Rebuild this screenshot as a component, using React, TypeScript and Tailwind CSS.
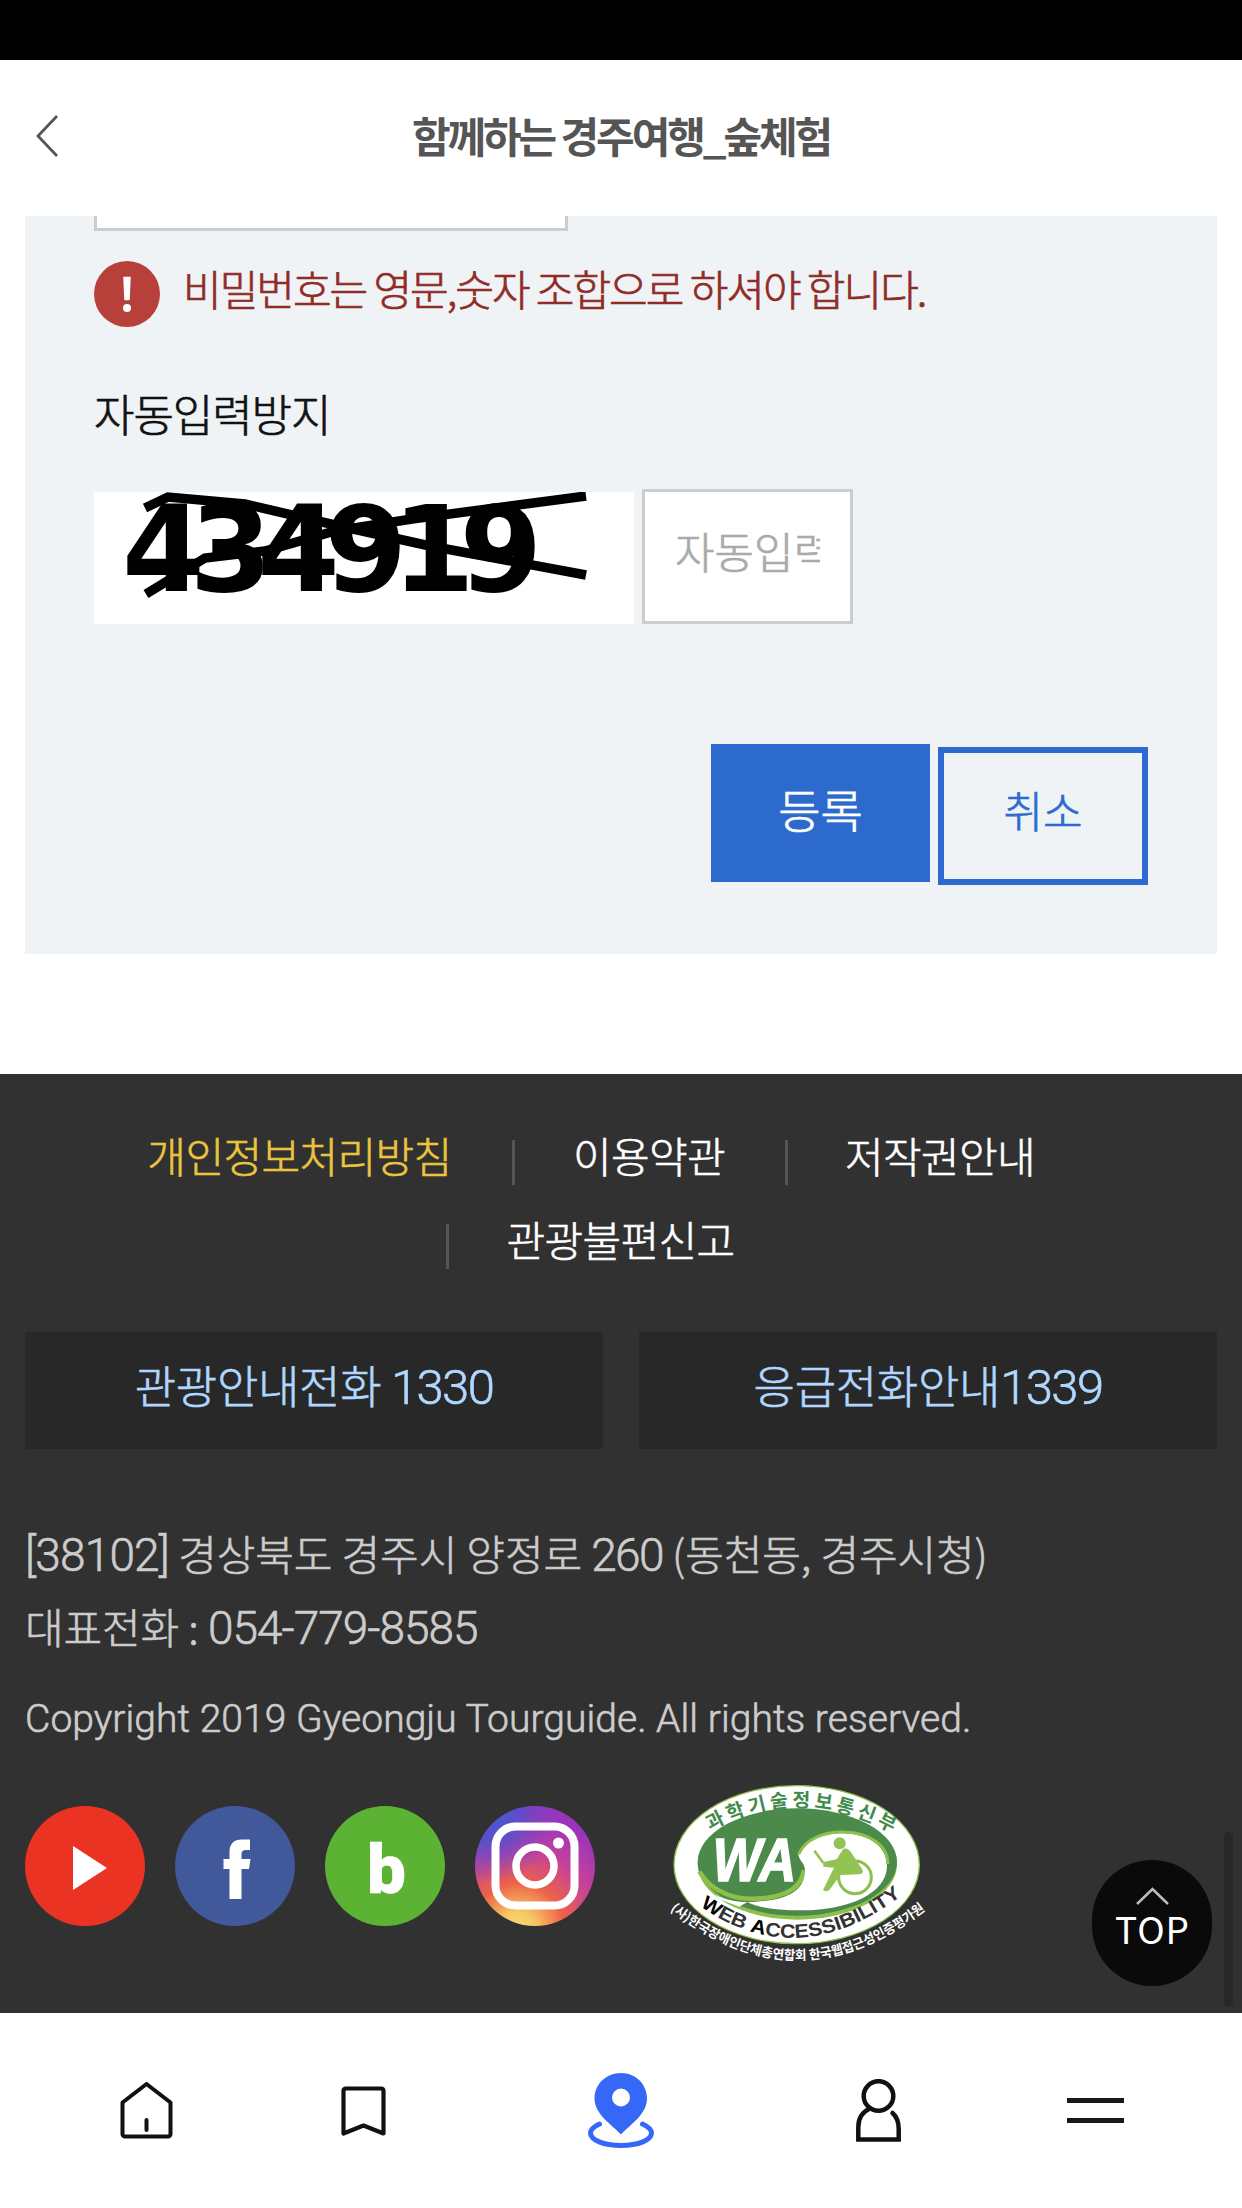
import React from "react";

function BackIcon() {
  return (
    <svg viewBox="0 0 22 42" className="h-[42px] w-[22px]" fill="none" stroke="#555" strokeWidth="2.8">
      <path d="M21 1 2 21l19 20" />
    </svg>
  );
}

function Captcha() {
  return (
    <svg viewBox="94 492 540 132" className="mt-[3px] h-[132px] w-[540px] bg-white">
      <text x="122" y="591" fontFamily="DejaVu Sans" fontWeight="700" fontSize="119" letterSpacing="-15.300">
        434919
      </text>
      <g fill="none" stroke="#000" strokeWidth="9.500">
        <path d="M146 594 L205 558 L265 551 L335 531 L412 519 L586 496" />
        <path d="M145 508 L168 497 L245 504 L335 525 L430 546 L586 575" />
      </g>
    </svg>
  );
}

function InstagramIcon() {
  return (
    <svg viewBox="0 0 120 120" className="h-[120px] w-[120px]">
      <defs>
        <radialGradient id="igWarm" cx="0.36" cy="1.02" r="0.95">
          <stop offset="0" stopColor="#fbdc73" />
          <stop offset="0.15" stopColor="#f8c765" />
          <stop offset="0.4" stopColor="#ed6248" />
          <stop offset="0.7" stopColor="#c4419b" />
          <stop offset="1" stopColor="#9a35bb" />
        </radialGradient>
        <radialGradient id="igCool" cx="0.1" cy="0.05" r="0.6">
          <stop offset="0" stopColor="#3b5fd8" />
          <stop offset="0.45" stopColor="#5a4fcb" stopOpacity="0.9" />
          <stop offset="1" stopColor="#7a3fc4" stopOpacity="0" />
        </radialGradient>
      </defs>
      <circle cx="60" cy="60" r="60" fill="url(#igWarm)" />
      <circle cx="60" cy="60" r="60" fill="url(#igCool)" />
      <rect x="20.5" y="20.5" width="79" height="79" rx="20" fill="none" stroke="#fff" strokeWidth="8" />
      <circle cx="60" cy="60" r="19" fill="none" stroke="#fff" strokeWidth="7.5" />
      <circle cx="83.500" cy="37" r="5.500" fill="#fff" />
    </svg>
  );
}

function WebAccessibilityMark() {
  return (
    <svg viewBox="0 0 900 630" className="-mt-9 ml-[55px] h-[210px] w-[300px]">
      <defs>
        <path id="arcTop" d="M180 182 Q 440 38 722 186" />
        <path id="arcMid" d="M150 408 Q 440 612 750 380" />
        <path id="arcLow" d="M60 420 Q 440 720 826 420" />
      </defs>
      <ellipse cx="440" cy="284" rx="368" ry="237" fill="#fff" stroke="#8fc04d" strokeWidth="4" />
      <ellipse cx="442" cy="283" rx="299" ry="166" fill="#8dc04b" />
      <ellipse cx="442" cy="276" rx="299" ry="161" fill="#4b8a4a" />
      <path
        d="M148 305 C190 375 270 390 320 386 C410 382 455 350 462 300"
        fill="none"
        stroke="#8dc04b"
        strokeWidth="14"
      />
      <path
        d="M445 255 C465 206 530 188 580 190 C665 192 711 235 711 288 C711 372 590 423 450 421 C380 421 320 412 292 396 L268 410 L210 388 L195 374 C240 396 280 397 320 395 C410 390 465 362 465 302 C465 280 450 275 445 255Z"
        fill="#fff"
      />
      <path
        d="M446 253 C465 205 530 184 580 186 C668 188 714 232 714 282"
        fill="none"
        stroke="#8dc04b"
        strokeWidth="9"
      />
      <text
        x="188"
        y="332"
        fontFamily="Liberation Sans"
        fontWeight="700"
        fontStyle="italic"
        fontSize="184"
        textLength="250"
        lengthAdjust="spacingAndGlyphs"
        fill="#fff"
        stroke="#fff"
        strokeWidth="5"
      >
        WA
      </text>
      <circle cx="615" cy="322" r="49" fill="#fff" stroke="#8dc04b" strokeWidth="9" />
      <circle cx="569" cy="220" r="18" fill="#93c353" />
      <path d="M580 236 Q594 232 604 248 L638 300 Q641 312 628 313 L572 315 L538 360 Q528 368 519 360 L552 293 L520 290 V276 L560 268Z" fill="#93c353" />
      <path d="M493 242 520 279" fill="none" stroke="#93c353" strokeWidth="8" />
      <text fontFamily="Noto Sans CJK KR" fontWeight="700" fontSize="58" fill="#3f8a4c">
        <textPath href="#arcTop" textLength="572">과학기술정보통신부</textPath>
      </text>
      <text fontFamily="Liberation Sans" fontWeight="700" fontSize="58" fill="#333">
        <textPath href="#arcMid" textLength="655" lengthAdjust="spacingAndGlyphs">
          <tspan fill="#000">W</tspan>EB <tspan fill="#000">A</tspan>CCESSIBILITY
        </textPath>
      </text>
      <text fontFamily="Noto Sans CJK KR" fontWeight="700" fontSize="40" fill="#fff">
        <textPath href="#arcLow" textLength="838" lengthAdjust="spacingAndGlyphs">(사)한국장애인단체총연합회 한국웹접근성인증평가원</textPath>
      </text>
    </svg>
  );
}

function SocialLinks() {
  return (
    <div className="mt-[59px] flex h-[120px] items-start">
      <div className="flex gap-[30px]">
        <div className="flex size-[120px] items-center justify-center rounded-full bg-[#eb3323]">
          <svg viewBox="0 0 34 44" className="mt-[3px] ml-[10px] h-[44px] w-[34px]" fill="#fff">
            <path d="M0 0 34 22 0 44Z" />
          </svg>
        </div>
        <svg viewBox="0 0 120 120" className="size-[120px]">
          <circle cx="60" cy="60" r="60" fill="#41599a" />
          <path d="M75 33.500V44H71Q66.500 44 66.500 48V53H75.500L74 63H66.500V93H54.500V63H48.500V53H54.500V46Q54.500 33.500 67 33.500Z" fill="#fff" />
        </svg>
        <div className="flex size-[120px] items-center justify-center rounded-full bg-[#5cb233]">
          <span className="mt-[8px] ml-[3px] font-[Roboto] text-[69px] leading-[80px] font-black text-white">b</span>
        </div>
        <InstagramIcon />
      </div>
      <WebAccessibilityMark />
    </div>
  );
}

function Divider() {
  return <i className="mt-[16px] block h-[45px] w-[3px] bg-[#555]" />;
}

function Footer() {
  return (
    <footer className="h-[939px] bg-[#313131] px-[25px] pt-[38px]">
      <div className="flex h-[84px] items-center pl-[125px] text-[42px] leading-[84px] tracking-[-0.6px] whitespace-nowrap text-white">
        <a className="mr-[62px] ml-[-1px] flex w-[301px] justify-center pt-px text-[#ecc540]">개인정보처리방침</a>
        <Divider />
        <a className="mr-[60px] ml-[58px] flex w-[152px] justify-center pt-px">이용약관</a>
        <Divider />
        <a className="ml-[59px] flex w-[186px] justify-center pt-px">저작권안내</a>
      </div>
      <div className="flex h-[84px] items-center pl-[421px] text-[42px] leading-[84px] tracking-[-0.6px] whitespace-nowrap text-white">
        <Divider />
        <a className="ml-[58px] flex w-[227px] justify-center pt-px">관광불편신고</a>
      </div>

      <div className="mt-[52px] grid grid-cols-2 gap-9 text-center text-[45px] leading-[105px] tracking-[-0.3px] text-[#b0d7ff]">
        <a className="h-[117px] bg-[#282828]">
          관광안내전화 <span className="font-[Roboto] text-[49px] tracking-[-1.6px]">1330</span>
        </a>
        <a className="h-[117px] bg-[#282828]">
          응급전화안내<span className="font-[Roboto] text-[49px] tracking-[-1.6px]">1339</span>
        </a>
      </div>

      <address className="mt-[67px] text-[42px] leading-[73px] tracking-[-0.1px] whitespace-nowrap text-[#ccc] not-italic">
        <span className="font-[Roboto] text-[46px] leading-none tracking-[-0.8px]">[38102]</span> 경상북도 경주시 양정로{" "}
        <span className="font-[Roboto] text-[46px] leading-none tracking-[-1.6px]">260</span> (동천동, 경주시청)
        <br />
        대표전화 : <span className="font-[Roboto] text-[46px] leading-none tracking-[-1px]">054-779-8585</span>
      </address>
      <p className="mt-[27px] mb-[-2px] font-[Roboto] text-[39px] leading-[60px] tracking-[0.05px] whitespace-nowrap text-[#ccc]">
        Copyright 2019 Gyeongju Tourguide. All rights reserved.
      </p>
      <SocialLinks />
    </footer>
  );
}

function BottomNav() {
  return (
    <nav className="flex h-[195px] items-center bg-white pl-[120px]">
      <svg viewBox="0 0 53 57" className="h-[57px] w-[53px]" fill="none" stroke="#111" strokeWidth="4" strokeLinejoin="round">
        <path d="M26.500 2 50.500 20.500V52a2.500 2.500 0 0 1-2.500 2.500H5A2.500 2.500 0 0 1 2.500 52V20.500Z" />
        <path d="M26.500 38v10" strokeLinecap="round" />
      </svg>
      <svg viewBox="0 0 45 50" className="ml-[168px] h-[50px] w-[45px]" fill="none" stroke="#111" strokeWidth="4.200" strokeLinejoin="round">
        <path d="M5 2.500H40Q42.500 2.500 42.500 5V47.500L22.500 39.500 2.500 47.500V5Q2.500 2.500 5 2.500Z" />
      </svg>
      <svg viewBox="0 0 66 75" className="ml-[202px] h-[75px] w-[66px]">
        <path fillRule="evenodd" fill="#3568f6" d="M33 0C47.500 0 59 11 59 25.500 59 41 43 51 33 61.500 23 51 6.500 41 6.500 25.500 6.500 11 18.500 0 33 0ZM33 15.500a9 9 0 1 0 0 18 9 9 0 0 0 0-18Z" />
        <path d="M11.500 51C5 54 2.500 57 2.500 60c0 7 13 12.500 30.500 12.500S63.500 67 63.500 60c0-3-2.500-6-9-9" fill="none" stroke="#3568f6" strokeWidth="5" strokeLinecap="round" />
      </svg>
      <svg viewBox="0 0 45 63" className="ml-[202px] h-[63px] w-[45px]" fill="none" stroke="#111" strokeWidth="4.500">
        <circle cx="22.500" cy="17" r="14.800" />
        <path d="M14 29.500C6 33 2.300 40 2.300 48V60.500H42.700V50C42.700 42 40.500 37.500 36.500 34" strokeLinecap="round" />
      </svg>
      <div className="ml-[166px] flex w-[57px] flex-col gap-[15px]">
        <i className="block h-[5px] bg-[#18171c]" />
        <i className="block h-[5px] bg-[#18171c]" />
      </div>
    </nav>
  );
}

export default function App() {
  return (
    <div className="relative h-[2208px] w-[1242px] overflow-hidden bg-white font-['Noto_Sans_CJK_KR',sans-serif] font-light">
      <div className="h-[60px] bg-black" />
      <header className="grid h-[156px] grid-cols-[340px_1fr_340px] items-center">
        <div className="-mt-[5px] pl-[36px]">
          <BackIcon />
        </div>
        <h1 className="-mt-[6px] text-center text-[42px] leading-[60px] font-bold tracking-[-3.1px] whitespace-nowrap text-[#555]">
          함께하는 경주여행_숲체험
        </h1>
      </header>

      <main className="h-[858px] px-[25px] [-webkit-text-stroke:0.7px]">
        <section className="h-[738px] bg-[#eff3f6] px-[69px]">
          <div className="h-[15px] w-[474px] border-[3px] border-t-0 border-[#ccc] bg-white" />
          <p className="mt-[30px] flex h-[66px] items-center text-[42px] tracking-[-2px] whitespace-nowrap text-[#902b26]">
            <svg viewBox="0 0 66 66" className="mr-[23px] size-[66px]">
              <circle cx="33" cy="33" r="33" fill="#b7403a" />
              <path d="M30 16.500h6l-1 22h-4Z" fill="#fff" stroke="#fff" strokeWidth="1.500" strokeLinejoin="round" />
              <circle cx="33" cy="47" r="4" fill="#fff" />
            </svg>
            <span className="-mt-[12px] leading-[60px]">비밀번호는 영문,숫자 조합으로 하셔야 합니다.</span>
          </p>
          <label className="mt-[56px] block h-[60px] text-[44px] leading-[60px] tracking-[-1.1px] text-[#111]">
            자동입력방지
          </label>
          <div className="mt-[46px] flex h-[135px] gap-2">
            <Captcha />
            <div className="w-[211px] border-[3px] border-[#ccc] bg-white px-[30px]">
              <div className="overflow-hidden text-[43px] leading-[117px] whitespace-nowrap text-[#aaa]">자동입력</div>
            </div>
          </div>
          <div className="mt-[120px] flex justify-end gap-2 text-[46px]">
            <button className="h-[138px] w-[219px] bg-[#2c6bcd] pb-[10px] text-white">등록</button>
            <button className="mt-[3px] h-[138px] w-[210px] border-[6px] border-[#2c6bcd] pb-[14px] text-[43px] text-[#2c6bcd]">
              취소
            </button>
          </div>
        </section>
      </main>

      <div className="[-webkit-text-stroke:0.6px]">
        <Footer />
      </div>
      <BottomNav />

      <a className="absolute top-[1860px] left-[1092px] flex h-[126px] w-[120px] flex-col items-center rounded-[60px] bg-[#0a0a0a] pt-[27px] font-normal text-white">
        <svg viewBox="0 0 33 18" className="h-[18px] w-[33px]" fill="none" stroke="#bbb" strokeWidth="2.500">
          <path d="M1 17 16.500 2 32 17" />
        </svg>
        <span className="mt-[4px] ml-px text-[37px] leading-[38px] tracking-[1px]">TOP</span>
      </a>
      <div className="absolute top-[1832px] left-[1224px] h-[175px] w-[9px] rounded-full bg-[#272727]" />
    </div>
  );
}
